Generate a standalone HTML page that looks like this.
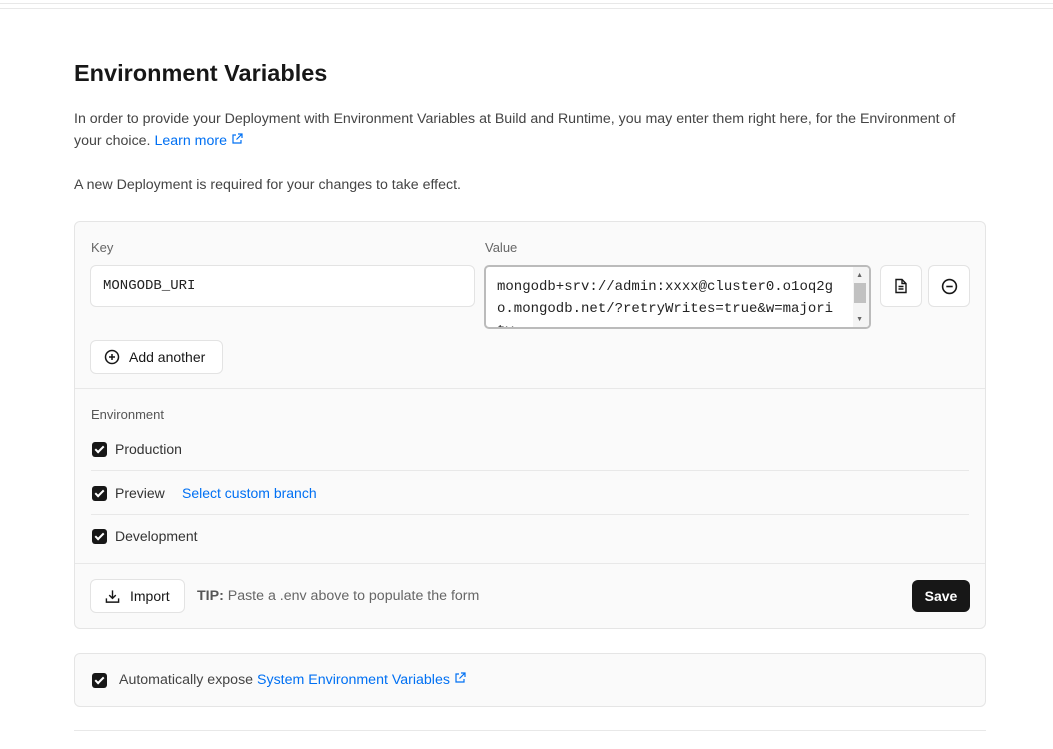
<!DOCTYPE html>
<html><head><style>
*{box-sizing:border-box;margin:0;padding:0}
body{width:1053px;height:749px;background:#fff;font-family:"Liberation Sans",sans-serif;color:#171717;position:relative;overflow:hidden}
.abs{position:absolute}
.mono{font-family:"Liberation Mono",monospace}
.card{position:absolute;left:74px;width:912px;border:1px solid #e5e5e5;border-radius:6px;background:#fafafa}
.inp{position:absolute;background:#fff;border:1px solid #e3e3e3;border-radius:6px}
.btn{position:absolute;background:#fff;border:1px solid #e3e3e3;border-radius:6px;font-size:14px;display:flex;align-items:center}
.cb{position:absolute;width:15px;height:15px;background:#171717;border-radius:3px}
.cb:after{content:"";position:absolute;left:5px;top:2px;width:3px;height:7px;border:solid #fff;border-width:0 2px 2px 0;transform:rotate(45deg)}
.lbl{position:absolute;font-size:14px;color:#333}
.sep{position:absolute;left:16px;right:16px;height:1px;background:#e8e8e8}
a{color:#0070f3;text-decoration:none}
</style></head><body>
<div class="abs" style="left:0;top:3px;width:1053px;height:1px;background:#e8e8e8"></div>
<div class="abs" style="left:0;top:8px;width:1053px;height:1px;background:#e8e8e8"></div>
<div class="abs" style="left:74px;top:60px;font-size:23.5px;font-weight:bold;color:#171717">Environment Variables</div>
<div class="abs" style="left:74px;top:108px;width:912px;font-size:14.2px;line-height:22px;color:#444">In order to provide your Deployment with Environment Variables at Build and Runtime, you may enter them right here, for the Environment of<br>your choice. <a>Learn more <svg width="12" height="12" viewBox="0 0 12 12" fill="none" stroke="#0070f3" stroke-width="1.2"><path d="M5 2H2v8h8V7M7 1h4v4M11 1L5.5 6.5"/></svg></a></div>
<div class="abs" style="left:74px;top:177px;font-size:14.2px;color:#444">A new Deployment is required for your changes to take effect.</div>

<div class="card" style="top:221px;height:408px">
  <div class="abs" style="left:16px;top:18px;font-size:13px;color:#666">Key</div>
  <div class="abs" style="left:410px;top:18px;font-size:13px;color:#666">Value</div>
  <div class="inp" style="left:15px;top:43px;width:385px;height:42px"><div class="mono abs" style="left:12px;top:12px;font-size:14px;color:#222">MONGODB_URI</div></div>
  <div class="inp" style="left:409px;top:43px;width:387px;height:64px;border:2px solid #bbb;border-radius:5px;overflow:hidden">
    <div class="mono abs" style="left:11px;top:9px;font-size:14px;line-height:22px;color:#222;width:360px;white-space:nowrap">mongodb+srv://admin:xxxx@cluster0.o1oq2g<br>o.mongodb.net/?retryWrites=true&amp;w=majori<br>ty</div>
    <div class="abs" style="right:0;top:0;width:16px;height:62px;background:#f4f4f4"></div>
    <div class="abs" style="right:3px;top:16px;width:12px;height:20px;background:#c1c1c1"></div>
    <div class="abs" style="right:6px;top:5px;font-size:7px;color:#666">▲</div>
    <div class="abs" style="right:6px;bottom:4px;font-size:7px;color:#666">▼</div>
  </div>
  <div class="btn" style="left:805px;top:43px;width:42px;height:42px;justify-content:center"><svg width="16" height="16" viewBox="0 0 16 16" fill="none" stroke="#171717" stroke-width="1.4"><path d="M3 1.5h6l4 4v9H3z M9 1.5v4h4 M5.5 8.5h5 M5.5 11h5"/></svg></div>
  <div class="btn" style="left:853px;top:43px;width:42px;height:42px;justify-content:center"><svg width="17" height="17" viewBox="0 0 16 16" fill="none" stroke="#171717" stroke-width="1.5"><circle cx="8" cy="8" r="6.5"/><path d="M5 8h6"/></svg></div>
  <div class="btn" style="left:15px;top:118px;width:133px;height:34px;padding-left:13px"><svg width="16" height="16" viewBox="0 0 16 16" fill="none" stroke="#171717" stroke-width="1.5"><circle cx="8" cy="8" r="6.5"/><path d="M5 8h6M8 5v6"/></svg><span style="margin-left:9px">Add another</span></div>
  <div class="abs" style="left:0;right:0;top:166px;height:1px;background:#e8e8e8"></div>
  <div class="abs" style="left:16px;top:185px;font-size:13px;color:#555">Environment</div>
  <div class="cb" style="left:17px;top:220px"></div><div class="lbl" style="left:40px;top:219px">Production</div>
  <div class="sep" style="top:248px"></div>
  <div class="cb" style="left:17px;top:264px"></div><div class="lbl" style="left:40px;top:263px">Preview</div><div class="lbl" style="left:107px;top:263px"><a>Select custom branch</a></div>
  <div class="sep" style="top:292px"></div>
  <div class="cb" style="left:17px;top:307px"></div><div class="lbl" style="left:40px;top:306px">Development</div>
  <div class="abs" style="left:0;right:0;top:341px;height:1px;background:#e8e8e8"></div>
  <div class="btn" style="left:15px;top:357px;width:95px;height:34px;padding-left:14px"><svg width="15" height="15" viewBox="0 0 16 16" fill="none" stroke="#171717" stroke-width="1.5"><path d="M8 1.5v8M4.5 6.5L8 10l3.5-3.5M1.5 10v4h13v-4"/></svg><span style="margin-left:10px">Import</span></div>
  <div class="lbl" style="left:122px;top:366px;color:#666;font-size:14.2px"><b style="color:#555">TIP:</b> Paste a .env above to populate the form</div>
  <div class="abs" style="left:837px;top:358px;width:58px;height:32px;background:#171717;border-radius:6px;color:#fff;font-size:14px;font-weight:bold;text-align:center;line-height:32px">Save</div>
</div>

<div class="card" style="top:653px;height:54px">
  <div class="cb" style="left:17px;top:19px"></div>
  <div class="lbl" style="left:44px;top:18px;color:#444;font-size:14.2px">Automatically expose <a>System Environment Variables <svg width="12" height="12" viewBox="0 0 12 12" fill="none" stroke="#0070f3" stroke-width="1.2"><path d="M5 2H2v8h8V7M7 1h4v4M11 1L5.5 6.5"/></svg></a></div>
</div>
<div class="abs" style="left:74px;top:730px;width:912px;height:1px;background:#e8e8e8"></div>
</body></html>
